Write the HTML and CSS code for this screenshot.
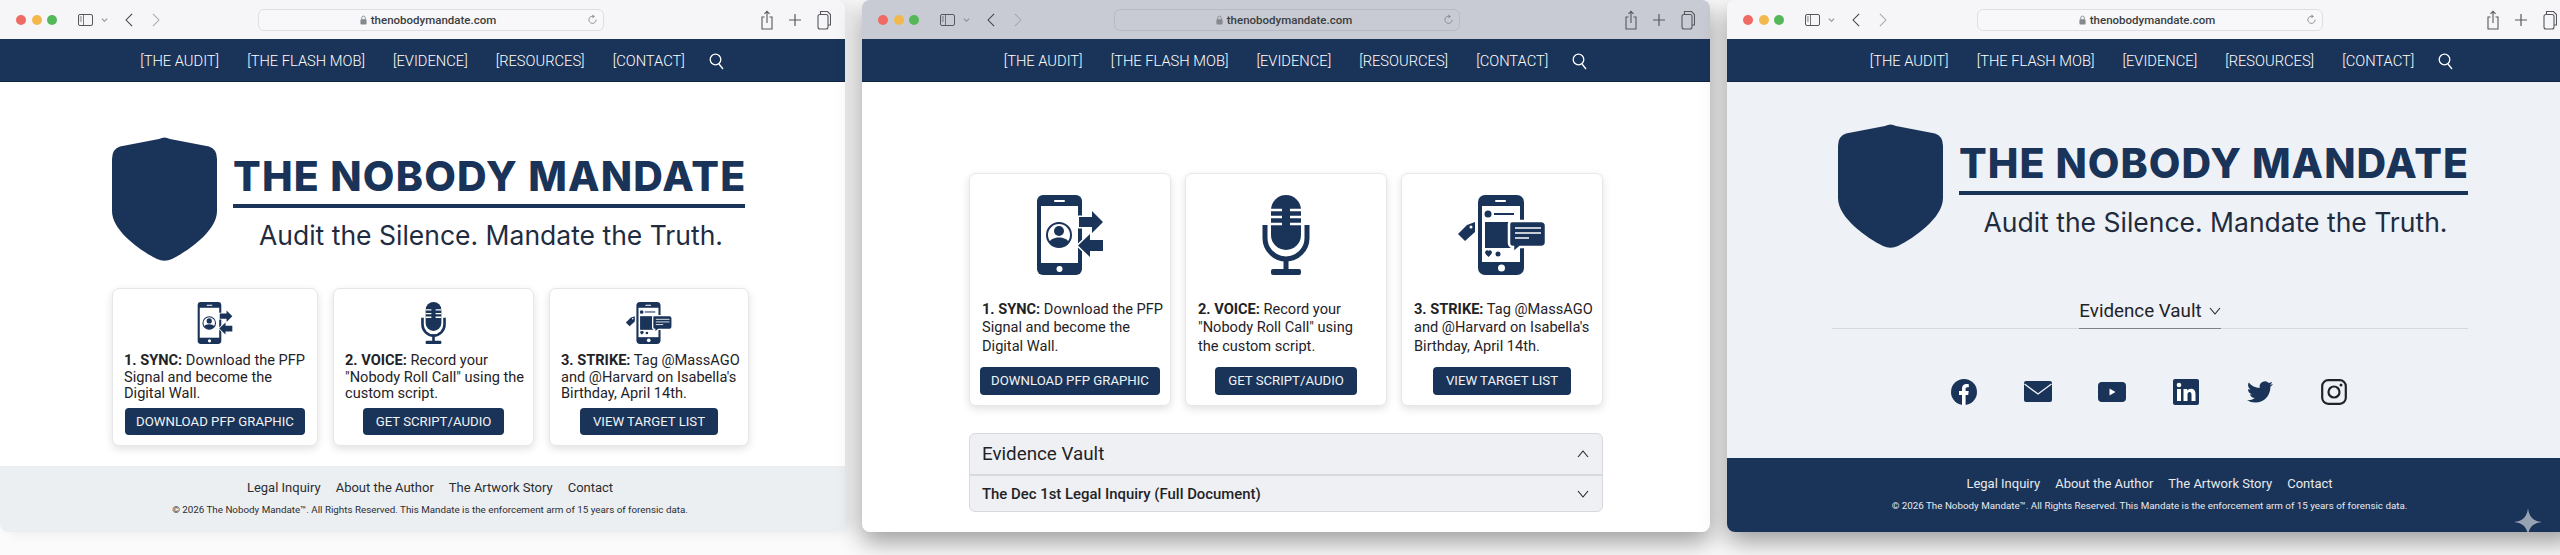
FILE: index.html
```html
<!DOCTYPE html>
<html lang="en">
<head>
    <meta charset="UTF-8">
    <meta name="viewport" content="width=device-width, initial-scale=1.0">
    <title>The Nobody Mandate</title>
    <link rel="stylesheet" href="styles.css">
</head>
<body>
    <!-- shared icons -->
    <svg class="icon-defs" aria-hidden="true">
        <defs>
            <symbol id="i-sidebar" viewBox="0 0 15 12">
                <rect x="0.5" y="0.5" width="14" height="11" rx="1.5" fill="none" stroke="currentColor"/>
                <path d="M5.5 0.5v11M1.8 3h2M1.8 5h2M1.8 7h2" fill="none" stroke="currentColor" stroke-width="0.8"/>
            </symbol>
            <symbol id="i-down" viewBox="0 0 8 6">
                <path d="M1 1.5l3 3 3-3" fill="none" stroke="currentColor" stroke-width="1.2"/>
            </symbol>
            <symbol id="i-chevron" viewBox="0 0 12 8">
                <path d="M1 1l5 6 5-6" fill="none" stroke="currentColor" stroke-width="1.1"/>
            </symbol>
            <symbol id="i-back" viewBox="0 0 9 16">
                <path d="M8 1L1.2 8 8 15" fill="none" stroke="currentColor" stroke-width="1.2"/>
            </symbol>
            <symbol id="i-forward" viewBox="0 0 9 16">
                <path d="M1 1l6.8 7L1 15" fill="none" stroke="currentColor" stroke-width="1.2"/>
            </symbol>
            <symbol id="i-lock" viewBox="0 0 8 11">
                <rect x="0.5" y="4.5" width="7" height="6" rx="1" fill="currentColor"/>
                <path d="M2 5V3a2 2 0 014 0v2" fill="none" stroke="currentColor"/>
            </symbol>
            <symbol id="i-reload" viewBox="0 0 10 12">
                <path d="M6.5 2.6A4 4 0 1 0 9 6.2" fill="none" stroke="currentColor"/>
                <path d="M5 0.5l2.6 2.1L5 4.6z" fill="currentColor"/>
            </symbol>
            <symbol id="i-share" viewBox="0 0 12 20">
                <path d="M3.5 7H1v12h10V7H8.500M6 13V1.500M3.500 3.800L6 1.300l2.500 2.500" fill="none" stroke="currentColor" stroke-width="1.100"/>
            </symbol>
            <symbol id="i-plus" viewBox="0 0 14 14">
                <path d="M7 1v12M1 7h12" fill="none" stroke="currentColor" stroke-width="1.200"/>
            </symbol>
            <symbol id="i-tabs" viewBox="0 0 14 20">
                <path d="M3.500 4V1.500h7l3 3V15H11" fill="none" stroke="currentColor" stroke-width="1.100"/>
                <rect x="1" y="4.500" width="10" height="14.500" rx="2" fill="none" stroke="currentColor" stroke-width="1.100"/>
            </symbol>
            <symbol id="i-search" viewBox="0 0 15 17">
                <circle cx="6.500" cy="6.500" r="5.300" fill="none" stroke="currentColor" stroke-width="1.300"/>
                <path d="M10 11l4 5" fill="none" stroke="currentColor" stroke-width="1.300"/>
            </symbol>
            <symbol id="i-shield" viewBox="0 0 105 124">
                <path d="M52.500 0.500Q55 0.500 58 2L97 9.500Q105 12 105 22V74C105 94 76 114 60 122Q52.500 125.500 45 122C29 114 0 94 0 74V22Q0 12 8 9.500L47 2Q50 0.500 52.500 0.500Z" fill="currentColor"/>
            </symbol>
            <symbol id="i-sync" viewBox="0 0 66 80">
                <rect x="0" y="0" width="45" height="80" rx="6" fill="currentColor"/>
                <rect x="4" y="11" width="37" height="57" fill="#fff"/>
                <rect x="17" y="5" width="11" height="2" rx="1" fill="#fff"/>
                <circle cx="22.500" cy="74" r="3" fill="#fff"/>
                <circle cx="22" cy="40" r="12" fill="none" stroke="currentColor" stroke-width="2"/>
                <circle cx="22" cy="36" r="5" fill="currentColor"/>
                <path d="M12.500 47c2-6 17-6 19 0a12 12 0 01-19 0z" fill="currentColor"/>
                <path d="M42 22h13v-6l11 11-11 11v-6H42z" fill="#fff" stroke="#fff" stroke-width="3"/>
                <path d="M42 22h13v-6l11 11-11 11v-6H42z" fill="currentColor"/>
                <path d="M66 45H53v-6L41 50.500 53 62v-6h13z" fill="#fff" stroke="#fff" stroke-width="3"/>
                <path d="M66 45H53v-6L41 50.500 53 62v-6h13z" fill="currentColor"/>
            </symbol>
            <symbol id="i-mic" viewBox="0 0 48 80">
                <rect x="9" y="0" width="30" height="55" rx="15" fill="currentColor"/>
                <path d="M9 15h11M28 15h11M9 22h11M28 22h11M9 29h11M28 29h11" stroke="#fff" stroke-width="2.500"/>
                <path d="M3 30v13a21 21 0 0042 0V30" fill="none" stroke="currentColor" stroke-width="5"/>
                <path d="M24 62v14" stroke="currentColor" stroke-width="5"/>
                <rect x="9" y="74" width="30" height="6" rx="2" fill="currentColor"/>
            </symbol>
            <symbol id="i-strike" viewBox="0 0 88 80">
                <rect x="20" y="0" width="46" height="80" rx="7" fill="currentColor"/>
                <rect x="24" y="11" width="38" height="56" fill="#fff"/>
                <rect x="37" y="5" width="11" height="2" rx="1" fill="#fff"/>
                <circle cx="43.500" cy="73" r="3.500" fill="#fff"/>
                <circle cx="30" cy="19" r="3.500" fill="currentColor"/>
                <path d="M36 19h20" stroke="currentColor" stroke-width="2"/>
                <rect x="27" y="27" width="28" height="26" fill="currentColor"/>
                <path d="M27 57c1-2 3-2 3.500-1 .5-1 2.500-1 3.500 1 0 2-2 3.500-3.500 5-1.500-1.500-3.500-3-3.500-5z" fill="currentColor"/>
                <circle cx="40" cy="59" r="2.500" fill="currentColor"/>
                <path d="M54 26h29a5 5 0 015 5v16a5 5 0 01-5 5H62l-7 6v-6a4 4 0 01-4-4V29a3 3 0 013-3z" fill="currentColor" stroke="#fff" stroke-width="2.500"/>
                <path d="M57 33h26M57 38h26M57 43h14" stroke="#fff" stroke-width="1.600"/>
                <path d="M9 30l8-3v10L7 46 0 39z" fill="currentColor"/>
                <circle cx="13" cy="32" r="1.500" fill="#fff"/>
            </symbol>
            <symbol id="i-facebook" viewBox="0 0 26 26">
                <circle cx="13" cy="13" r="13" fill="currentColor"/>
                <path d="M11 26V16H8v-4h3V9.500C11 6.500 12.800 5 15.400 5c1.200 0 2.400.2 2.400.2v3h-1.400c-1.400 0-1.800.8-1.800 1.700V12h3.100l-.5 4h-2.600v10z" fill="#fff"/>
            </symbol>
            <symbol id="i-mail" viewBox="0 0 28 22">
                <rect x="0" y="0" width="28" height="21" rx="2" fill="currentColor"/>
                <path d="M0.500 3L14 13 27.500 3" fill="none" stroke="#eef1f5" stroke-width="1.400"/>
            </symbol>
            <symbol id="i-youtube" viewBox="0 0 28 20">
                <rect x="0" y="0" width="28" height="20" rx="4" fill="currentColor"/>
                <path d="M11.500 6.500l6 3.500-6 3.500z" fill="#fff"/>
            </symbol>
            <symbol id="i-linkedin" viewBox="0 0 26 26">
                <rect x="0" y="0" width="26" height="26" rx="2" fill="currentColor"/>
                <rect x="4" y="10" width="4" height="12" fill="#fff"/>
                <circle cx="6" cy="6" r="2.300" fill="#fff"/>
                <path d="M10.500 10h3.800v1.700c.7-1.200 2-2 3.600-2 3.200 0 4.600 2 4.600 5.300v7h-4v-6.300c0-1.700-.6-2.700-1.900-2.700-1.400 0-2.100 1-2.100 2.700V22h-4z" fill="#fff"/>
            </symbol>
            <symbol id="i-twitter" viewBox="0 0 24 24">
                <path d="M23.953 4.570a10 10 0 01-2.825.775 4.958 4.958 0 002.163-2.723c-.951.555-2.005.959-3.127 1.184a4.920 4.920 0 00-8.384 4.482C7.690 8.095 4.067 6.130 1.640 3.162a4.822 4.822 0 00-.666 2.475c0 1.710.870 3.213 2.188 4.096a4.904 4.904 0 01-2.228-.616v.060a4.923 4.923 0 003.946 4.827 4.996 4.996 0 01-2.212.085 4.936 4.936 0 004.604 3.417 9.867 9.867 0 01-6.102 2.105c-.390 0-.779-.023-1.170-.067a13.995 13.995 0 007.557 2.209c9.053 0 13.998-7.496 13.998-13.985 0-.210 0-.420-.015-.630A9.935 9.935 0 0024 4.590z" fill="currentColor"/>
            </symbol>
            <symbol id="i-instagram" viewBox="0 0 26 26">
                <rect x="1.200" y="1.200" width="23.600" height="23.600" rx="6" fill="none" stroke="currentColor" stroke-width="2.200"/>
                <circle cx="13" cy="13" r="5.500" fill="none" stroke="currentColor" stroke-width="2.200"/>
                <circle cx="20" cy="6" r="1.500" fill="currentColor"/>
            </symbol>
            <symbol id="i-sparkle" viewBox="0 0 28 28">
                <path d="M14 0C15 9 19 13 28 14 19 15 15 19 14 28 13 19 9 15 0 14 9 13 13 9 14 0Z" fill="currentColor"/>
            </symbol>
        </defs>
    </svg>

    <div class="windows">
        <!-- first window: home page with the three steps -->
        <section class="window win-one">
            <header class="toolbar">
                <div class="toolbar-left">
                    <span class="light light-red"></span>
                    <span class="light light-yellow"></span>
                    <span class="light light-green"></span>
                    <svg class="tb-sidebar"><use href="#i-sidebar"/></svg>
                    <svg class="tb-down"><use href="#i-down"/></svg>
                    <svg class="tb-back"><use href="#i-back"/></svg>
                    <svg class="tb-forward"><use href="#i-forward"/></svg>
                </div>
                <div class="url-bar">
                    <span class="url-text"><svg class="tb-lock"><use href="#i-lock"/></svg>thenobodymandate.com</span>
                    <svg class="tb-reload"><use href="#i-reload"/></svg>
                </div>
                <div class="toolbar-right">
                    <svg class="tb-share"><use href="#i-share"/></svg>
                    <svg class="tb-plus"><use href="#i-plus"/></svg>
                    <svg class="tb-tabs"><use href="#i-tabs"/></svg>
                </div>
            </header>
            <nav class="site-nav">
                <a>[THE AUDIT]</a>
                <a>[THE FLASH MOB]</a>
                <a>[EVIDENCE]</a>
                <a>[RESOURCES]</a>
                <a>[CONTACT]</a>
                <svg class="nav-search"><use href="#i-search"/></svg>
            </nav>
            <main class="content">
                <div class="logo">
                    <svg class="logo-shield"><use href="#i-shield"/></svg>
                    <div class="logo-text">
                        <h1>THE NOBODY MANDATE</h1>
                        <p>Audit the Silence. Mandate the Truth.</p>
                    </div>
                </div>
                <div class="steps">
                    <article class="step">
                        <svg class="step-icon"><use href="#i-sync"/></svg>
                        <p><b>1. SYNC:</b> Download the PFP<br>Signal and become the<br>Digital Wall.</p>
                        <a class="btn">DOWNLOAD PFP GRAPHIC</a>
                    </article>
                    <article class="step">
                        <svg class="step-icon"><use href="#i-mic"/></svg>
                        <p><b>2. VOICE:</b> Record your<br>"Nobody Roll Call" using the<br>custom script.</p>
                        <a class="btn">GET SCRIPT/AUDIO</a>
                    </article>
                    <article class="step">
                        <svg class="step-icon"><use href="#i-strike"/></svg>
                        <p><b>3. STRIKE:</b> Tag @MassAGO<br>and @Harvard on Isabella's<br>Birthday, April 14th.</p>
                        <a class="btn">VIEW TARGET LIST</a>
                    </article>
                </div>
            </main>
            <footer class="site-footer">
                <div class="footer-links">
                    <a>Legal Inquiry</a>
                    <a>About the Author</a>
                    <a>The Artwork Story</a>
                    <a>Contact</a>
                </div>
                <p>© 2026 The Nobody Mandate™. All Rights Reserved. This Mandate is the enforcement arm of 15 years of forensic data.</p>
            </footer>
        </section>

        <!-- second window: steps and the evidence accordion -->
        <section class="window win-two">
            <header class="toolbar">
                <div class="toolbar-left">
                    <span class="light light-red"></span>
                    <span class="light light-yellow"></span>
                    <span class="light light-green"></span>
                    <svg class="tb-sidebar"><use href="#i-sidebar"/></svg>
                    <svg class="tb-down"><use href="#i-down"/></svg>
                    <svg class="tb-back"><use href="#i-back"/></svg>
                    <svg class="tb-forward"><use href="#i-forward"/></svg>
                </div>
                <div class="url-bar">
                    <span class="url-text"><svg class="tb-lock"><use href="#i-lock"/></svg>thenobodymandate.com</span>
                    <svg class="tb-reload"><use href="#i-reload"/></svg>
                </div>
                <div class="toolbar-right">
                    <svg class="tb-share"><use href="#i-share"/></svg>
                    <svg class="tb-plus"><use href="#i-plus"/></svg>
                    <svg class="tb-tabs"><use href="#i-tabs"/></svg>
                </div>
            </header>
            <nav class="site-nav">
                <a>[THE AUDIT]</a>
                <a>[THE FLASH MOB]</a>
                <a>[EVIDENCE]</a>
                <a>[RESOURCES]</a>
                <a>[CONTACT]</a>
                <svg class="nav-search"><use href="#i-search"/></svg>
            </nav>
            <main class="content">
                <div class="steps">
                    <article class="step">
                        <svg class="step-icon"><use href="#i-sync"/></svg>
                        <p><b>1. SYNC:</b> Download the PFP<br>Signal and become the<br>Digital Wall.</p>
                        <a class="btn">DOWNLOAD PFP GRAPHIC</a>
                    </article>
                    <article class="step">
                        <svg class="step-icon"><use href="#i-mic"/></svg>
                        <p><b>2. VOICE:</b> Record your<br>"Nobody Roll Call" using<br>the custom script.</p>
                        <a class="btn">GET SCRIPT/AUDIO</a>
                    </article>
                    <article class="step">
                        <svg class="step-icon"><use href="#i-strike"/></svg>
                        <p><b>3. STRIKE:</b> Tag @MassAGO<br>and @Harvard on Isabella's<br>Birthday, April 14th.</p>
                        <a class="btn">VIEW TARGET LIST</a>
                    </article>
                </div>
                <div class="accordion">
                    <div class="acc-head">
                        <span>Evidence Vault</span>
                        <svg class="acc-up"><use href="#i-chevron"/></svg>
                    </div>
                    <div class="acc-item">
                        <span>The Dec 1st Legal Inquiry (Full Document)</span>
                        <svg class="acc-down"><use href="#i-chevron"/></svg>
                    </div>
                </div>
            </main>
        </section>

        <!-- third window: mobile style menu and socials -->
        <section class="window win-three">
            <header class="toolbar">
                <div class="toolbar-left">
                    <span class="light light-red"></span>
                    <span class="light light-yellow"></span>
                    <span class="light light-green"></span>
                    <svg class="tb-sidebar"><use href="#i-sidebar"/></svg>
                    <svg class="tb-down"><use href="#i-down"/></svg>
                    <svg class="tb-back"><use href="#i-back"/></svg>
                    <svg class="tb-forward"><use href="#i-forward"/></svg>
                </div>
                <div class="url-bar">
                    <span class="url-text"><svg class="tb-lock"><use href="#i-lock"/></svg>thenobodymandate.com</span>
                    <svg class="tb-reload"><use href="#i-reload"/></svg>
                </div>
                <div class="toolbar-right">
                    <svg class="tb-share"><use href="#i-share"/></svg>
                    <svg class="tb-plus"><use href="#i-plus"/></svg>
                    <svg class="tb-tabs"><use href="#i-tabs"/></svg>
                </div>
            </header>
            <nav class="site-nav">
                <a>[THE AUDIT]</a>
                <a>[THE FLASH MOB]</a>
                <a>[EVIDENCE]</a>
                <a>[RESOURCES]</a>
                <a>[CONTACT]</a>
                <svg class="nav-search"><use href="#i-search"/></svg>
            </nav>
            <main class="content">
                <div class="logo">
                    <svg class="logo-shield"><use href="#i-shield"/></svg>
                    <div class="logo-text">
                        <h1>THE NOBODY MANDATE</h1>
                        <p>Audit the Silence. Mandate the Truth.</p>
                    </div>
                </div>
                <div class="vault-bar">
                    <div class="vault-tab">
                        <span>Evidence Vault</span>
                        <svg class="vault-chevron"><use href="#i-chevron"/></svg>
                    </div>
                </div>
                <div class="socials">
                    <span class="social"><svg class="s-facebook"><use href="#i-facebook"/></svg></span>
                    <span class="social"><svg class="s-mail"><use href="#i-mail"/></svg></span>
                    <span class="social"><svg class="s-youtube"><use href="#i-youtube"/></svg></span>
                    <span class="social"><svg class="s-linkedin"><use href="#i-linkedin"/></svg></span>
                    <span class="social"><svg class="s-twitter"><use href="#i-twitter"/></svg></span>
                    <span class="social"><svg class="s-instagram"><use href="#i-instagram"/></svg></span>
                </div>
            </main>
            <footer class="site-footer">
                <div class="footer-links">
                    <a>Legal Inquiry</a>
                    <a>About the Author</a>
                    <a>The Artwork Story</a>
                    <a>Contact</a>
                </div>
                <p>© 2026 The Nobody Mandate™. All Rights Reserved. This Mandate is the enforcement arm of 15 years of forensic data.</p>
            </footer>
            <svg class="sparkle"><use href="#i-sparkle"/></svg>
        </section>
    </div>
</body>
</html>
```

FILE: styles.css
```css
:root {
    --navy: #1a3358;
    --ink: #1f2327;
    --line: #d6d9de;
}

* {
    margin: 0;
    padding: 0;
    box-sizing: border-box;
}

html,
body {
    width: 2560px;
    height: 555px;
    overflow: hidden;
}

body {
    background: #fbfbfb;
    font-family: Roboto, "Liberation Sans", sans-serif;
    color: var(--ink);
}

.icon-defs {
    display: block;
    width: 0;
    height: 0;
}

svg {
    display: block;
    flex: none;
}

.windows {
    display: flex;
    gap: 17px;
    width: 2560px;
}

/* browser window */
.window {
    position: relative;
    flex: none;
    display: flex;
    flex-direction: column;
    height: 532px;
    border-radius: 0 10px 8px 8px;
    overflow: hidden;
    background: #fff;
}

.win-one {
    width: 845px;
    box-shadow: 8px 0 14px rgba(0, 0, 0, 0.08);
}

.win-two {
    width: 848px;
    border-radius: 8px;
    box-shadow: 0 10px 24px rgba(0, 0, 0, 0.38);
}

.win-three {
    width: 850px;
    border-radius: 8px;
    background: #eef1f5;
    box-shadow: 0 10px 24px rgba(0, 0, 0, 0.38);
}

/* toolbar */
.toolbar {
    flex: none;
    display: flex;
    align-items: center;
    height: 39px;
    padding-right: 14px;
    background: #f6f6f8;
    color: #55585d;
}

.win-two .toolbar {
    padding-right: 15px;
    background: #c8cbd3;
}

.win-three .toolbar {
    padding-right: 20px;
}

.toolbar-left {
    display: flex;
    align-items: center;
    width: 258px;
    padding-left: 16px;
}

.win-two .toolbar-left {
    width: 252px;
}

.win-three .toolbar-left {
    width: 250px;
}

.light {
    width: 10px;
    height: 10px;
    margin-right: 5.5px;
    border-radius: 50%;
}

.light-red { background: #ee6a62; }
.light-yellow { background: #f2b84c; }
.light-green { background: #54b859; }

.tb-sidebar {
    width: 15px;
    height: 12px;
    margin-left: 15px;
}

.tb-down {
    width: 7px;
    height: 6px;
    margin-left: 8px;
    color: #8a8d92;
}

.tb-back {
    width: 8px;
    height: 16px;
    margin-left: 17px;
    color: #3f4246;
}

.tb-forward {
    width: 8px;
    height: 16px;
    margin-left: 19px;
    color: #a6a9ae;
}

.url-bar {
    display: grid;
    grid-template-columns: 1fr auto 1fr;
    align-items: center;
    width: 346px;
    height: 22px;
    padding-right: 6px;
    border: 1px solid #dedfe3;
    border-radius: 6px;
    background: #f8f8fa;
    font-size: 11.500px;
    font-weight: 500;
    color: #3a3d41;
}

.win-two .url-bar {
    border-color: #b7bac2;
    background: #c8cbd3;
}

.url-text {
    grid-column: 2;
    display: flex;
    align-items: center;
    gap: 4px;
}

.tb-lock {
    width: 7px;
    height: 10px;
    color: #85888d;
}

.tb-reload {
    grid-column: 3;
    justify-self: end;
    width: 9px;
    height: 11px;
    color: #85888d;
}

.toolbar-right {
    display: flex;
    align-items: center;
    gap: 15px;
    margin-left: auto;
}

.tb-share {
    width: 12px;
    height: 20px;
}

.tb-plus {
    width: 14px;
    height: 14px;
}

.tb-tabs {
    width: 14px;
    height: 20px;
}

/* site nav */
.site-nav {
    flex: none;
    display: flex;
    align-items: center;
    justify-content: center;
    gap: 28px;
    height: 43px;
    padding: 2px 0 0 19px;
    border-bottom: 1px solid #10233f;
    background: var(--navy);
    color: #fff;
    font-size: 14.700px;
    font-weight: 300;
}

.nav-search {
    width: 15px;
    height: 17px;
    margin-left: -4px;
}

/* main */
.content {
    flex: 1;
    display: flex;
    flex-direction: column;
    padding: 55px 0 0 112px;
}

.win-two .content {
    padding: 91px 0 0 107px;
}

.win-three .content {
    padding: 42px 0 0 105px;
}

.logo {
    display: flex;
    gap: 16px;
    color: var(--navy);
}

.win-three .logo {
    margin-left: 6px;
}

.logo-shield {
    width: 105px;
    height: 124px;
}

.logo-text {
    width: 512px;
    padding-top: 19px;
    font-family: Inter, sans-serif;
}

.win-three .logo-text {
    width: 509px;
}

.logo-text h1 {
    height: 52px;
    border-bottom: 4px solid var(--navy);
    font-size: 41px;
    line-height: 41px;
    font-weight: 800;
    letter-spacing: 1.200px;
    white-space: nowrap;
}

.win-three .logo-text h1 {
    letter-spacing: 1px;
}

.logo-text p {
    margin-top: 10px;
    padding-left: 4px;
    text-align: center;
    font-size: 26.500px;
    line-height: 34px;
    color: #1f2c3f;
}

.steps {
    display: grid;
    grid-template-columns: 206px 201px 200px;
    gap: 15px;
    margin-top: 27px;
}

.win-two .steps {
    grid-template-columns: repeat(3, 202px);
    gap: 14px;
    margin-top: 0;
}

.step {
    display: flex;
    flex-direction: column;
    height: 158px;
    padding: 13px 11px 0;
    border: 1px solid #e6e7e9;
    border-radius: 7px;
    background: #fff;
    box-shadow: 0 3px 8px rgba(0, 0, 0, 0.12);
}

.win-two .step {
    height: 233px;
    padding: 21px 12px 0;
}

.step-icon {
    width: 100%;
    height: 42px;
    color: var(--navy);
}

.win-two .step-icon {
    height: 80px;
}

.step p {
    margin-top: 8px;
    font-size: 14.600px;
    line-height: 16.500px;
    white-space: nowrap;
}

.win-two .step p {
    margin-top: 25px;
    line-height: 18.300px;
}

.btn {
    align-self: center;
    margin-top: 6px;
    padding: 0 11px;
    border-radius: 4px;
    background: var(--navy);
    color: #f1f3f6;
    font-size: 13.200px;
    line-height: 27px;
    white-space: nowrap;
}

.win-two .btn {
    margin-top: 12px;
    line-height: 28px;
}

.step:nth-child(n + 2) .btn {
    padding: 0 13px;
}

/* accordion */
.accordion {
    width: 634px;
    margin-top: 27px;
    border: 1px solid var(--line);
    border-radius: 6px;
    background: #eef0f4;
}

.acc-head,
.acc-item {
    display: flex;
    align-items: center;
    justify-content: space-between;
    padding: 0 13px 0 12px;
}

.acc-head {
    height: 42px;
    border-bottom: 2px solid var(--line);
    font-size: 18.800px;
}

.acc-item {
    height: 35px;
    font-size: 14.900px;
    font-weight: 500;
}

.acc-up,
.acc-down {
    width: 12px;
    height: 8px;
}

.acc-up {
    transform: rotate(180deg);
}

/* third window */
.vault-bar {
    display: flex;
    justify-content: center;
    width: 636px;
    margin-top: 51px;
    border-bottom: 1px solid var(--line);
}

.vault-tab {
    display: flex;
    align-items: center;
    gap: 7px;
    height: 30px;
    margin-bottom: -1px;
    padding-bottom: 5px;
    border-bottom: 1px solid #7d8288;
    font-size: 18.800px;
}

.vault-chevron {
    width: 12px;
    height: 8px;
}

.socials {
    display: flex;
    width: 444px;
    margin: 49px 0 0 95px;
    color: var(--navy);
}

.social {
    display: flex;
    align-items: center;
    justify-content: center;
    width: 74px;
    height: 28px;
}

.s-facebook { width: 26px; height: 26px; }
.s-mail { width: 28px; height: 22px; }
.s-youtube { width: 28px; height: 20px; }
.s-linkedin { width: 26px; height: 26px; }
.s-twitter { width: 28px; height: 26px; }
.s-instagram { width: 26px; height: 26px; color: #20242a; }

/* footer */
.site-footer {
    flex: none;
    display: flex;
    flex-direction: column;
    align-items: center;
    height: 66px;
    padding: 13px 0 0 15px;
    background: #eceff2;
    font-size: 9.800px;
    color: #2a2d31;
}

.win-three .site-footer {
    height: 74px;
    padding: 17px 5px 0 0;
    background: var(--navy);
    color: #e7eaef;
}

.footer-links {
    display: flex;
    gap: 15px;
    font-size: 13px;
    line-height: 18px;
}

.site-footer p {
    margin-top: 6px;
    line-height: 14px;
    white-space: nowrap;
}

.sparkle {
    position: absolute;
    left: 787px;
    top: 508px;
    width: 28px;
    height: 28px;
    color: rgba(255, 255, 255, 0.55);
}
```
